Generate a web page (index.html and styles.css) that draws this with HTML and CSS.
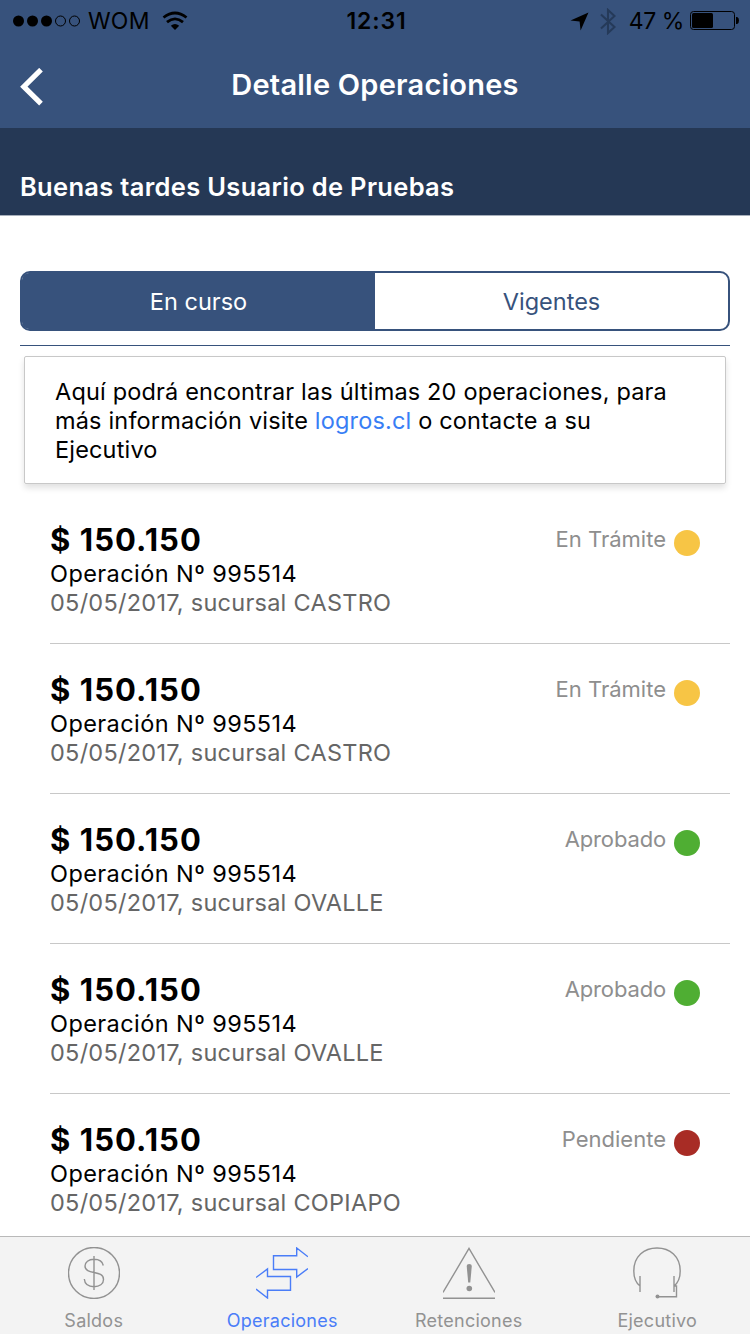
FILE: index.html
```html
<!DOCTYPE html>
<html lang="es">
<head>
<meta charset="utf-8">
<title>Detalle Operaciones</title>
<link rel="stylesheet" href="styles.css">
</head>
<body>
<div class="app">
  <header class="header">
    <div class="status">
      <div class="status-left">
        <svg class="signal" width="68" height="12" viewBox="0 0 68 12">
          <circle cx="5.5" cy="6" r="5.5"/><circle cx="19.5" cy="6" r="5.5"/><circle cx="33.5" cy="6" r="5.5"/>
          <g fill="none" stroke="#000"><circle cx="47.5" cy="6" r="5"/><circle cx="61.5" cy="6" r="5"/></g>
        </svg>
        <span class="carrier">WOM</span>
        <svg class="wifi" width="26" height="20" viewBox="0 0 26 20">
          <g fill="none" stroke="#000" stroke-width="2.8"><path d="M1.500 6.500Q13 -2.600 24.500 6.500"/><path d="M5 11.200Q13 4.600 21 11.200"/></g>
          <path d="M8.800 14.700Q13 11.100 17.200 14.700L13 18.900Z"/>
        </svg>
      </div>
      <span class="clock">12:31</span>
      <div class="status-right">
        <svg width="19" height="19" viewBox="0 0 19 19"><path d="M18.500 .5L10.600 18.500L9.600 9.400L.5 8.400Z"/></svg>
        <svg class="bluetooth" width="16" height="27" viewBox="0 0 16 27"><path d="M1 6.500L14.500 19L8 25V2L14.500 8L1 20.500" fill="none" stroke="#253a59" stroke-width="2.100"/></svg>
        <span class="percent">47 %</span>
        <svg class="battery" width="50" height="20" viewBox="0 0 50 20">
          <rect x=".5" y=".5" width="44" height="18" rx="3" fill="none" stroke="#000"/>
          <rect x="2" y="2" width="21" height="15" rx="1.5"/>
          <path d="M46 6h1.200Q49 6.500 49 9.500T47.200 13H46Z"/>
        </svg>
      </div>
    </div>
    <div class="nav">
      <svg class="back" width="24" height="38" viewBox="0 0 24 38"><path d="M21 1.700L3.800 18.700L21 35.700" fill="none" stroke="#fff" stroke-width="5.200"/></svg>
      <h1 class="title">Detalle Operaciones</h1>
    </div>
  </header>
  <div class="greeting"><span>Buenas tardes Usuario de Pruebas</span></div>
  <main class="content">
    <div class="segments">
      <div class="segment active">En curso</div>
      <div class="segment">Vigentes</div>
    </div>
    <div class="rule"></div>
    <p class="card">Aquí podrá encontrar las últimas 20 operaciones, para<br>más información visite <a class="link">logros.cl</a> o contacte a su<br>Ejecutivo</p>
    <ul class="list">
      <li class="item"><div class="info"><b class="amount">$ 150.150</b><span class="op">Operación Nº 995514</span><span class="date">05/05/2017, sucursal CASTRO</span></div><div class="state"><span>En Trámite</span><i class="dot yellow"></i></div></li>
      <li class="item"><div class="info"><b class="amount">$ 150.150</b><span class="op">Operación Nº 995514</span><span class="date">05/05/2017, sucursal CASTRO</span></div><div class="state"><span>En Trámite</span><i class="dot yellow"></i></div></li>
      <li class="item"><div class="info"><b class="amount">$ 150.150</b><span class="op">Operación Nº 995514</span><span class="date">05/05/2017, sucursal OVALLE</span></div><div class="state"><span class="approved">Aprobado</span><i class="dot green"></i></div></li>
      <li class="item"><div class="info"><b class="amount">$ 150.150</b><span class="op">Operación Nº 995514</span><span class="date">05/05/2017, sucursal OVALLE</span></div><div class="state"><span class="approved">Aprobado</span><i class="dot green"></i></div></li>
      <li class="item"><div class="info"><b class="amount">$ 150.150</b><span class="op">Operación Nº 995514</span><span class="date">05/05/2017, sucursal COPIAPO</span></div><div class="state"><span>Pendiente</span><i class="dot red"></i></div></li>
    </ul>
  </main>
  <nav class="tabs">
    <div class="tab">
      <svg width="52" height="52" viewBox="0 0 52 52"><circle cx="26" cy="26" r="25.500"/><path d="M26 9V43M35.300 18.500C34.500 14.500 31 12.300 26 12.300C20.500 12.300 17 15.300 17 19C17 28.500 35.500 22.500 35.500 32.500C35.500 37 31.500 39.700 26 39.700C20 39.700 16.700 36.500 16.300 32"/></svg>
      <span>Saldos</span>
    </div>
    <div class="tab selected">
      <svg width="52" height="52" viewBox="0 0 52 52"><path d="M52 9.800L40.700 1V8.700H17.500V22.500H40.700V30L52 21.500M0 30.500L11.500 22V29.500H34.500V43.300H11.500V51L0 42"/></svg>
      <span>Operaciones</span>
    </div>
    <div class="tab">
      <svg width="52" height="52" viewBox="0 0 52 52"><path d="M0 45.500L26 1.500L52 45.500M0 51.300H52"/><path class="solid" d="M23.700 19Q23.700 17 26.200 17T28.800 19L27.300 35.500H25.200Z"/><circle class="solid" cx="26.300" cy="41.500" r="2.800"/></svg>
      <span>Retenciones</span>
    </div>
    <div class="tab last">
      <svg width="52" height="52" viewBox="0 0 52 52"><path d="M9 29V45M43 29V45M9 39C4.500 35.500 2.800 30 2.800 24C2.800 9.500 13 1 26 1S49.200 9.500 49.200 24C49.200 30 47.500 35.500 43 39M43 39H45.500V49.800H28"/><circle class="solid" cx="26.500" cy="49.600" r="2"/></svg>
      <span>Ejecutivo</span>
    </div>
  </nav>
</div>
</body>
</html>
```
FILE: styles.css
```css
* { box-sizing: border-box; }
body {
  margin: 0;
  font-family: Inter, "Liberation Sans", sans-serif;
  font-size: 23.500px;
  line-height: 29px;
  color: #000;
  background: #fff;
  white-space: nowrap;
}
svg { display: block; flex: none; }
.app { width: 750px; height: 1334px; display: flex; flex-direction: column; overflow: hidden; }
.header { height: 128px; background: #37527c; flex: none; }
.status { height: 40px; display: grid; grid-template-columns: 1fr auto 1fr; align-items: center; padding: 2px 10px 0 13px; font-size: 23px; }
.status-left, .status-right { display: flex; align-items: center; }
.signal { margin-top: -1px; }
.status-right { justify-content: flex-end; }
.carrier { margin-left: 7px; letter-spacing: .2px; }
.wifi { margin-left: 12px; margin-top: -1px; }
.clock { font-weight: 600; letter-spacing: .9px; }
.bluetooth { margin-left: 11px; margin-right: 13px; }
.percent { letter-spacing: -.4px; }
.battery { margin-left: 6px; }
.nav { height: 88px; display: grid; grid-template-columns: 40px 1fr 40px; padding: 0 20px; align-items: center; }
.back { margin-top: 5px; }
.title { margin: 0; font-size: 29px; font-weight: 600; letter-spacing: .23px; color: #fff; text-align: center; }
.greeting { height: 88px; flex: none; background: #253855; border-bottom: 1px solid #a7afbb; color: #fff; font-size: 25.500px; font-weight: 600; letter-spacing: .31px; padding: 44px 20px 0; }
.content { flex: 1; min-height: 0; overflow: hidden; padding: 55px 20px 0; }
.segments { height: 60px; display: grid; grid-template-columns: 353px 1fr; border: 2px solid #37527c; border-radius: 10px; }
.segment { display: flex; align-items: center; justify-content: center; color: #37527c; }
.segment.active { background: #37527c; color: #fff; border-radius: 7px 0 0 7px; }
.rule { height: 1px; margin-top: 14px; background: #37527c; }
.card { margin: 10px 4px 0; height: 128px; border: 1px solid #c8c8c8; border-radius: 2px; padding: 20px 30px; box-shadow: 0 4px 6px rgba(0,0,0,.12); letter-spacing: .17px; }
.link { color: #387ef5; }
.list { list-style: none; margin: 10px 0 0 30px; padding: 0; }
.item { height: 150px; display: flex; justify-content: space-between; border-bottom: 1px solid #c8c8c8; padding: 26px 30px 0 0; }
.info { display: flex; flex-direction: column; align-items: flex-start; }
.amount { font-size: 31px; line-height: 40px; font-weight: 700; letter-spacing: 1.050px; margin-bottom: -1px; }
.op { letter-spacing: .42px; }
.date { color: #666; letter-spacing: .26px; }
.state { display: flex; height: 38px; align-items: center; color: #8e8e8e; font-size: 22px; }
.approved { letter-spacing: -.15px; }
.dot { width: 26px; height: 26px; border-radius: 50%; margin: 8px 0 0 8px; }
.yellow { background: #f7c545; }
.green { background: #4fae33; }
.red { background: #a82c25; }
.tabs { height: 98px; flex: none; display: grid; grid-template-columns: repeat(4, 1fr); background: #f3f3f3; border-top: 1px solid #b9b9b9; }
.tab { display: flex; flex-direction: column; align-items: center; padding-top: 10px; color: #929292; font-size: 18px; letter-spacing: .25px; }
.tab span { margin-top: 7px; }
.tab svg { fill: none; stroke: currentColor; stroke-width: 1.400; }
.tab .solid { fill: currentColor; stroke: none; }
.tab.selected { color: #4a7df8; }
.tab.selected, .tab.last { padding-left: 2px; }
```
